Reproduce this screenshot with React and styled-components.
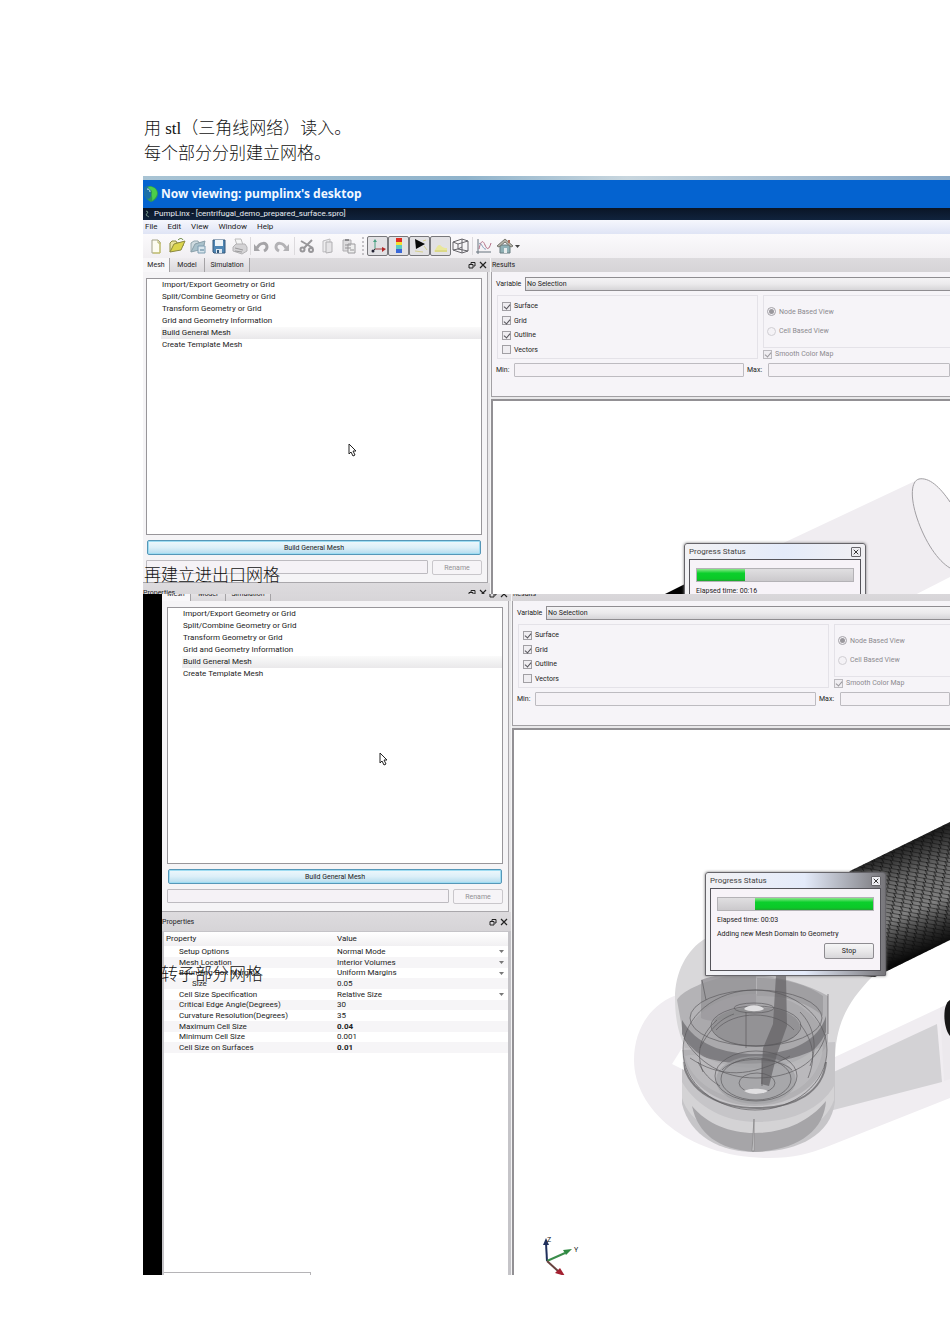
import React from "react";
import styled, { createGlobalStyle, css } from "styled-components";

const GlobalStyle = createGlobalStyle`
  * { box-sizing: border-box; }
  body { margin: 0; background: #fff; }
  button, input, select { font: inherit; color: inherit; margin: 0; }
`;

const ui = `Roboto, "Noto Sans", sans-serif`;
const docFont = `"Liberation Serif", "Noto Sans CJK SC", serif`;

/* ---------- document ---------- */
const Page = styled.main`
  padding: 116px 0 69px 143px;
  overflow: hidden;
`;
const Paragraph = styled.p`
  margin: 0;
  padding-left: 1px;
  font: 300 17px/25px ${docFont};
  color: #111;
  white-space: nowrap;
`;
const Caption = styled(Paragraph)`
  position: absolute;
  z-index: 3;
  left: ${(p) => p.$x}px;
  top: ${(p) => p.$y}px;
`;
const Figure = styled.section`
  position: relative;
  margin-top: ${(p) => p.$gap || 0}px;
  font: 7px/10px ${ui};
  color: #222;
  display: flex;
  background: #000;
  padding-left: ${(p) => p.$inset || 0}px;
  overflow: hidden;
`;
const Screen = styled.div`
  flex: 1;
  min-width: 0;
  background: #e9e8ea;
`;

/* ---------- window chrome ---------- */
const SkyStrip = styled.div`
  height: 4px;
  background: linear-gradient(90deg, #a9c4d4, #8fb3cb 40%, #c8d6de 60%, #88a9c8);
`;
const Banner = styled.header`
  height: 28px;
  display: flex;
  align-items: center;
  gap: 3px;
  padding-left: 1px;
  background: #0463d0;
  color: #f2f8ff;
  font: 700 12px/16px "Noto Sans", sans-serif;
  white-space: nowrap;
`;
const TitleBar = styled.div`
  height: 12px;
  display: flex;
  align-items: center;
  gap: 4px;
  padding-left: 2px;
  background: linear-gradient(#0a1526, #10233d);
  color: #e8edf2;
  font-size: 8px;
  white-space: nowrap;
`;
const MenuBar = styled.nav`
  height: 14px;
  display: flex;
  align-items: center;
  gap: 10px;
  padding-left: 2px;
  background: linear-gradient(#f6f7fd, #dfe4f5);
  font-size: 8px;
`;
const MenuButton = styled.button`
  border: 0;
  padding: 0;
  background: none;
`;
const ToolBar = styled.div`
  height: 24px;
  display: flex;
  align-items: center;
  padding-left: 3px;
  background: linear-gradient(#fbfafc, #f1eff2);
`;
const ToolGroup = styled.div`
  display: flex;
  gap: ${(p) => p.$gap || 0}px;
`;
const ToolButton = styled.button`
  width: ${(p) => (p.$on ? 21 : 20)}px;
  height: 20px;
  padding: 0;
  display: grid;
  place-items: center;
  border: 1px solid ${(p) => (p.$on ? "#77777b" : "transparent")};
  border-radius: 2px;
  background: ${(p) => (p.$on ? "#e2e1e4" : "none")};
`;
const Separator = styled.span`
  width: 1px;
  height: 18px;
  margin: 0 ${(p) => p.$side}px;
  background: #dcdadd;
`;
const Grip = styled.span`
  width: 2px;
  height: 18px;
  margin: 0 3px;
  border-left: 2px dotted #c4c2c6;
`;

/* ---------- workspace ---------- */
const Workspace = styled.div`
  display: flex;
  overflow: hidden;
  ${(p) => p.$clip && css`height: 336px;`}
`;
const Sidebar = styled.aside`
  position: relative;
  flex: none;
  width: ${(p) => 344 + p.$edge}px;
  display: flex;
  flex-direction: column;
  margin-top: ${(p) => p.$lift || 0}px;
`;
const Main = styled.section`
  flex: 1;
  min-width: 0;
  display: flex;
  flex-direction: column;
  border-left: 1px solid #f5f5f6;
  margin-top: ${(p) => p.$lift || 0}px;
`;
const DockBar = styled.div`
  flex: none;
  height: ${(p) => p.$h || 14}px;
  display: flex;
  align-items: center;
  background: linear-gradient(#dddbde, #d6d4d7);
`;
const DockTitle = styled.span`
  flex: 1;
  padding-left: ${(p) => p.$pad || 0}px;
`;
const Tab = styled.button`
  align-self: stretch;
  width: ${(p) => p.$w}px;
  padding: 0;
  border: 0;
  border-right: 1px solid #a5a3a6;
  background: ${(p) => (p.$on ? "#f8f7f9" : "linear-gradient(#eeecef, #dad8db)")};
`;
const DockControls = styled.div`
  display: flex;
  gap: 3px;
  margin-left: auto;
  padding-right: 3px;
`;
const IconButton = styled.button`
  width: 8px;
  height: 8px;
  padding: 0;
  border: 0;
  background: none;
  display: grid;
`;
const TaskPanel = styled.div`
  flex: none;
  height: 311px;
  margin-right: 2px;
  padding: 6px 5px 0 ${(p) => p.$edge}px;
  display: flex;
  flex-direction: column;
  gap: 5px;
  background: #f5f4f6;
  border: solid #a9a7ab;
  border-width: 0 1px 1px 0;
`;
const TaskList = styled.ul`
  height: 257px;
  margin: 0;
  padding: 0 0 0 14px;
  list-style: none;
  border: 1px solid #98969a;
  background: #fff;
`;
const TaskButton = styled.button`
  display: block;
  width: 100%;
  height: 12px;
  padding: 0 0 0 1px;
  border: 0;
  font-size: 8px;
  line-height: 12px;
  text-align: left;
  background: ${(p) => (p.$on ? "linear-gradient(#fafafa, #e9e8ea)" : "none")};
`;
const BuildButton = styled.button`
  flex: none;
  height: 15px;
  margin: 0 1px;
  padding: 0;
  border: 1px solid #5597b8;
  border-radius: 2px;
  background: linear-gradient(#eef8fc, #dceff8 50%, #b4dcee);
  box-shadow: inset 0 0 0 1px #9edcf2;
`;
const RenameRow = styled.div`
  display: flex;
  gap: 4px;
`;
const TextField = styled.input`
  flex: 1;
  min-width: 0;
  height: 14px;
  padding: 0 2px;
  border: 1px solid #bdbbc0;
  border-radius: 1px;
  background: #f5f2f6;
`;
const RenameButton = styled.button`
  width: 50px;
  height: 15px;
  padding: 0;
  border: 1px solid #c9c7cb;
  border-radius: 2px;
  background: #f6f4f7;
  color: #929094;
`;
const PropertyBox = styled.div`
  flex: 1;
  display: flex;
  flex-direction: column;
  background: #fff;
  border: solid #c5c4c8;
  border-width: 1px 3px 0 2px;
`;
const PropertyTable = styled.table`
  width: 100%;
  border-collapse: collapse;
  table-layout: fixed;
  font-size: 8px;
  line-height: 10px;
  td, th { padding: 0; text-align: left; font-weight: 400; white-space: nowrap; }
  thead tr { height: 14px; background: linear-gradient(#fff, #f1f0f2); }
  thead th { padding-left: 2px; }
  thead th:first-child { width: 171px; }
  tbody tr { height: 11px; }
  tbody tr:nth-child(3n) { height: 10px; }
  tbody tr:nth-child(even) { background: #f6f5f7; }
`;
const NameCell = styled.th`
  && { padding-left: ${(p) => (p.$deep ? 28 : 15)}px; }
`;
const ValueCell = styled.td`
  && { padding-left: 2px; font-weight: ${(p) => (p.$bold ? 700 : 400)}; }
`;
const ChoiceWrap = styled.span`
  display: flex;
  align-items: center;
  padding-right: 4px;
  height: 10px;
`;
const Choice = styled.select`
  flex: 1;
  min-width: 0;
  height: 10px;
  padding: 0;
  border: 0;
  appearance: none;
  background: none;
`;
const HintEdge = styled.div`
  width: 147px;
  height: 3px;
  margin-top: auto;
  border: solid #b5b4b7;
  border-width: 1px 1px 0 0;
`;

/* ---------- results form ---------- */
const ResultForm = styled.form`
  flex: none;
  height: 125px;
  padding: 5px 0 0 4px;
  display: flex;
  flex-direction: column;
  background: #f6f4f8;
  border: solid #a2a0a4;
  border-width: 0 0 1px 1px;
`;
const FormRow = styled.div`
  display: flex;
  align-items: center;
`;
const VariableLabel = styled.label`
  width: 29px;
`;
const VariableSelect = styled.select`
  flex: 1;
  min-width: 0;
  height: 14px;
  padding: 0 1px;
  border: 1px solid #8f8d91;
  border-right: 0;
  appearance: none;
  background: linear-gradient(#f4f3f5, #ebeaec 50%, #d6d5d8);
`;
const Options = styled.div`
  display: grid;
  grid-template-columns: ${(p) => p.$columns};
  column-gap: 5px;
  margin: 4px 0 0 1px;
  height: 64px;
`;
const GroupBox = styled.fieldset`
  min-width: 0;
  margin: 0;
  padding: ${(p) => (p.$muted ? "6px 3px" : "3px 4px 1px")};
  display: flex;
  flex-direction: column;
  border: 1px solid #e4e2e8;
  border-right-width: ${(p) => (p.$open ? 0 : 1)}px;
  height: ${(p) => p.$h}px;
  color: ${(p) => (p.$muted ? "#8c8a8f" : "#222")};
`;
const CheckLine = styled.label`
  flex: 1;
  display: flex;
  align-items: center;
  gap: 3px;
  line-height: 12px;
  color: ${(p) => (p.$muted ? "#8c8a8f" : "inherit")};
`;
const CheckBox = styled.input`
  appearance: none;
  flex: none;
  width: 9px;
  height: 9px;
  display: grid;
  place-items: center;
  border: 1px solid #a19fa4;
  background: #efedf1;
  &:checked::before {
    content: "";
    width: 3px;
    height: 5px;
    border: solid #55535a;
    border-width: 0 1px 1px 0;
    transform: rotate(40deg);
  }
  &:disabled { border-color: #bcbabf; }
  &:disabled::before { border-color: #99979c; }
`;
const Radio = styled.input`
  appearance: none;
  flex: none;
  width: 9px;
  height: 9px;
  display: grid;
  place-items: center;
  border: 1px solid #d0ced3;
  border-radius: 50%;
  background: #f4f2f6;
  &:checked { border-color: #a4a2a8; }
  &:checked::before {
    content: "";
    width: 5px;
    height: 5px;
    border-radius: 50%;
    background: #9a989d;
  }
`;
const RangeRow = styled.div`
  display: grid;
  grid-template-columns: 18px ${(p) => p.$columns};
  align-items: center;
  margin-top: 4px;
`;
const MaxLabel = styled.label`
  padding-left: 3px;
`;

/* ---------- viewport ---------- */
const Viewport = styled.div`
  position: relative;
  flex: 1;
  margin-top: 2px;
  background: #fff;
  border: solid #929094;
  border-width: 2px 0 0 2px;
  overflow: hidden;
  svg.scene { display: block; }
`;
const Dialog = styled.section`
  position: absolute;
  left: ${(p) => p.$x}px;
  top: ${(p) => p.$y}px;
  width: ${(p) => p.$w}px;
  padding: 0 4px 4px;
  border: 1px solid #66656a;
  border-radius: 3px 3px 0 0;
  background: linear-gradient(90deg, #f2f2f4, #e4ebfa 55%, ${(p) => p.$tint});
  box-shadow: 0 0 3px #777;
`;
const DialogBar = styled.header`
  height: 15px;
  display: flex;
  align-items: center;
  justify-content: space-between;
  font-size: 8px;
  color: #444;
`;
const CloseButton = styled.button`
  width: 10px;
  height: 10px;
  padding: 0;
  display: grid;
  place-items: center;
  border: 1px solid #66656a;
  border-radius: 1px;
  background: #eeeef2;
`;
const DialogBody = styled.div`
  height: 83px;
  padding: 8px 6px;
  display: flex;
  flex-direction: column;
  border: 1px solid #55545a;
  background: #f7f3f8;
`;
const Track = styled.div`
  height: 14px;
  display: flex;
  justify-content: ${(p) => (p.$end ? "flex-end" : "flex-start")};
  border: 1px solid #b4b2b6;
  background: linear-gradient(#e0dfe1, #cbc9cc);
  margin-bottom: 4px;
`;
const Fill = styled.div`
  background: linear-gradient(#8be88b, #0ccf2c 35%, #0bc928 80%, #20a530);
`;
const StatusText = styled.p`
  margin: 0 0 4px;
  white-space: nowrap;
`;
const StopButton = styled.button`
  align-self: flex-end;
  flex: none;
  width: 50px;
  height: 16px;
  padding: 0;
  border: 1px solid #8e8c91;
  border-radius: 2px;
  background: linear-gradient(#f6f6f7, #e9e8ea 50%, #d8d7da);
`;
const Pointer = styled.svg`
  position: absolute;
  left: ${(p) => p.$x}px;
  top: ${(p) => p.$y}px;
`;

/* ---------- icons ---------- */
const Icon = ({ children, size = 18 }) => (
  <svg width={size} height={size} viewBox="0 0 18 18" fill="none" aria-hidden="true">{children}</svg>
);
const icons = {
  new: <><path d="M5 3h6l2 2v11H5z" fill="#fdfcf0" stroke="#a3a288" /><path d="M11 3v3h3" stroke="#b5b26a" /><path d="M13 6v10H6" stroke="#c9c55e" /></>,
  open: <><path d="M2 15V6l2-2h4l1 2h6v3" fill="#e9e29a" stroke="#8b893f" /><path d="M2 15l4-8 11-3-4 9z" fill="#dbd44c" stroke="#8b893f" /><path d="M10 3c2-2 4-2 5 0" stroke="#5a7a30" /></>,
  import: <><path d="M2 15V6l3-2h4l1 2h5v2" fill="#cfdbe0" stroke="#93a6ae" /><path d="M2 15l4-8 10-3-2 8z" fill="#a9c1cb" stroke="#8ba0aa" /><path d="M9 9h7v7H9z" fill="#d8e5ec" stroke="#7c9cb0" /><path d="M11 13h4" stroke="#517a94" /></>,
  save: <><path d="M3 3h12v13H4l-1-1z" fill="#4f86b4" stroke="#34597b" /><path d="M5 3h8v6H5z" fill="#eef4f8" /><path d="M6 12h6v4H6z" fill="#dfe9f0" /><path d="M7 13h2v3H7z" fill="#34597b" /></>,
  print: <><path d="M6 8L4 2h6l2 6" fill="#f5f5f5" stroke="#bbb" /><path d="M2 10l3-3h9l2 3v4l-5 3-9-3z" fill="#d4d3d5" stroke="#b3b2b4" /><path d="M4 11l8 2M4 14l7 1" stroke="#9b9a9c" /></>,
  undo: <><path d="M2 7v7h6z" fill="#a5a4a7" /><path d="M5 11c3-6 10-6 10-1 0 2-1 3-3 4" stroke="#a5a4a7" strokeWidth="3" /></>,
  redo: <><path d="M16 7v7h-6z" fill="#b3b2b5" /><path d="M13 11C10 5 3 5 3 10c0 2 1 3 3 4" stroke="#b3b2b5" strokeWidth="3" /></>,
  cut: <><path d="M3 4l12 7M14 3L6 11" stroke="#98979a" strokeWidth="2" /><circle cx="4.500" cy="12.500" r="2" stroke="#98979a" strokeWidth="2" /><circle cx="13" cy="13" r="2" stroke="#98979a" strokeWidth="2" /></>,
  copy: <><path d="M4 4l7-2v12l-7 1z" fill="#ededee" stroke="#bdbcbf" /><path d="M7 5h6v10l-6 1z" fill="#e5e4e6" stroke="#b0afb2" /></>,
  paste: <><path d="M3 3h8v11H3z" fill="#dddcde" stroke="#b0afb2" /><path d="M5 3h4" stroke="#8a898c" strokeWidth="2" /><path d="M8 7h7v9H8z" fill="#eee" stroke="#9b9a9d" /><path d="M5 8h6M5 11h6M10 13h4" stroke="#939295" /></>,
  axes: <><path d="M6 12V4" stroke="#4aa182" /><path d="M4 5l2-3 2 3z" fill="#4aa182" /><path d="M6 12h8" stroke="#9c4444" /><path d="M13 10l4 2-4 3z" fill="#b32929" /><path d="M6 12l-2 2" stroke="#334" /><circle cx="4" cy="14" r="1.500" fill="#223" /></>,
  colors: <><path d="M6 1h6v4H6z" fill="#df2d22" /><path d="M6 5h6v3H6z" fill="#f1df31" /><path d="M6 8h6v4H6z" fill="#5ccbc0" /><path d="M6 12h6v4H6z" fill="#3a68d8" /></>,
  light: <><path d="M4 2l10 5-9 5z" fill="#080808" /><path d="M13 9l3 4M4 14l8 1M12 4l3-1" stroke="#d6d08c" /></>,
  surface: <><path d="M2 14c2-1 3-7 6-6 2 1 2 3 7 3v4H3z" fill="#e9e79c" /><path d="M3 14h12" stroke="#cdca73" /></>,
  cube: <><path d="M1 5l9-3 6 2v10l-6 2-9-3zM10 2v14M1 5l5 2 10-3M6 7v5M1 13l5-1 10 2M6 12l4-2" stroke="#66656a" /></>,
  graph: <><path d="M3 2v13h13" stroke="#66727d" /><path d="M1 15h2v2" stroke="#66727d" /><path d="M4 12c2-9 4-9 6-4s4 5 6-2" stroke="#b36f86" /><path d="M4 7c2-3 4 6 7 5" stroke="#7b96b2" /></>,
  home: <><path d="M4 8h10v8H4z" fill="#8fb0b5" stroke="#687c80" /><path d="M1 9l8-7 8 7-2 1-6-5-6 5z" fill="#b5b4a9" stroke="#77776f" /><path d="M8 11h3v5H8z" fill="#e8ecec" /><path d="M13 3v3" stroke="#b0705c" strokeWidth="2" /></>,
};
const Globe = () => (
  <svg width="14" height="18" viewBox="0 0 14 18" aria-hidden="true">
    <path d="M0 3c4-4 13-2 14 5 0 5-4 8-7 9-4-2-7-6-7-9z" fill="#2f9a55" />
    <path d="M0 3c3-3 8-1 7 2s1 4 0 6-2 3-3 3C1 13 0 10 0 8z" fill="#1b6fa8" />
    <path d="M4 2c4-1 9 1 9 6 0 4-3 6-5 8 1-4-1-5 0-8s-3-3-4-6z" fill="#4ccf4a" />
    <path d="M3 4c2 0 3 1 3 3" stroke="#d3f0dd" fill="none" />
  </svg>
);
const FloatIcon = () => (
  <svg width="8" height="8" viewBox="0 0 8 8" fill="none" stroke="#222" aria-hidden="true">
    <path d="M3 3V1.500h4V5H5.500" /><path d="M1 3.500h4V7H1z" />
  </svg>
);
const CrossIcon = ({ size = 8 }) => (
  <svg width={size} height={size} viewBox="0 0 8 8" stroke="#222" strokeWidth="1.200" aria-hidden="true">
    <path d="M1 1l6 6M7 1L1 7" />
  </svg>
);
const Caret = ({ color = "#444" }) => (
  <svg width="5" height="3" viewBox="0 0 5 3" fill={color} aria-hidden="true"><path d="M0 0h5L2.500 3z" /></svg>
);
const MousePointer = (p) => (
  <Pointer {...p} width="9" height="14" viewBox="0 0 9 14" aria-hidden="true">
    <path d="M1 1v10l2-2 2 4 2-1-2-4h3z" fill="#fff" stroke="#222" />
  </Pointer>
);

/* ---------- scenes ---------- */
const PipeScene = () => (
  <svg className="scene" width="457" height="194" viewBox="493 401 457 194" aria-hidden="true">
    <path d="M913 482L760 554 690 600H905L950 577V500L925 479z" fill="#f0edf1" />
    <path d="M950 502C940 487 929 477 919 479c-8 2-9 18-2 39 8 24 21 43 33 50" fill="#f3f1f4" stroke="#a19fa3" />
    <path d="M663 595l24-12v12z" fill="#000" />
  </svg>
);

const ImpellerScene = () => (
  <svg className="scene" width="436" height="545" viewBox="514 730 436 545" aria-hidden="true">
    <defs>
      <pattern id="mesh" width="9" height="4" patternUnits="userSpaceOnUse" patternTransform="rotate(10)">
        <path d="M0 0h9M0 0l3 4" stroke="#0c0c0c" fill="none" />
      </pattern>
      <linearGradient id="tube" gradientUnits="userSpaceOnUse" x1="890" y1="850" x2="930" y2="950">
        <stop offset="0" stopColor="#202020" />
        <stop offset="0.300" stopColor="#6a6a6a" />
        <stop offset="0.600" stopColor="#808080" />
        <stop offset="0.850" stopColor="#2c2c2c" />
        <stop offset="1" stopColor="#080808" />
      </linearGradient>
    </defs>
    {/* volute casing */}
    <path d="M680 994C652 1002 634 1028 634 1060c0 50 55 98 135 98 25 0 40-4 60-12l121-48v-95l-115 54-8-20-60-50z" fill="#f0edf1" />
    {/* outlet channel */}
    <path d="M937 1024l-112 52-15 40 132-34z" fill="#d3d2d5" />
    <path d="M940 1008l10-5v76l-6 2z" fill="#ece9ed" />
    {/* suction pipe */}
    <path d="M706 938c-20 12-31 35-31 60 0 22 4 36 10 50l150 14c0-34 10-58 38-86l-20-10z" fill="#d9d8da" />
    {/* lower cylinder */}
    <path d="M682 1050v54c8 32 38 48 72 48 40 0 76-14 81-50v-60z" fill="#c6c5c8" />
    <path d="M682 1082c15 26 45 40 74 40 34 0 64-12 78-36v14c-10 28-40 38-78 38-36 0-66-14-74-40z" fill="#d4d3d5" />
    <path d="M692 1106c15 18 38 27 62 27 28 0 54-10 72-32-2 30-28 49-72 51-36-3-56-18-62-46z" fill="#a6a5a8" />
    <path d="M752 1151l2-32v32z" fill="#e4e3e5" stroke="#919092" />
    {/* upper ring */}
    <path d="M677 1000c4-8 24-18 50-24 34-4 72 4 101 20v46c-10 26-36 22-72 22-44 0-68-12-74-36z" fill="#b4b3b6" />
    <path d="M701 980v38c15 8 30 -4 55-6V975c-20-4-40 0-55 5z" fill="#959497" opacity="0.800" />
    <path d="M757 978c24 0 50 6 66 18v20c-20-16-40-20-66-20z" fill="#a09fa2" />
    <ellipse cx="755" cy="1050" rx="72" ry="56" fill="#a2a1a4" fillOpacity="0.550" />
    <path d="M682 1020c14 24 40 34 74 34s62-12 70-38v16c-10 24-36 36-70 36-36 0-64-12-74-34z" fill="#777679" opacity="0.850" />
    <path d="M685 1056c10-4 24 4 40 6 20 3 60 4 98-16-2 34-30 54-68 54-36 0-64-18-70-44z" fill="#bcbbbe" opacity="0.800" />
    <ellipse cx="756" cy="1027" rx="44" ry="20" fill="#848386" opacity="0.600" />
    <ellipse cx="756" cy="1080" rx="40" ry="24" fill="#a09fa2" opacity="0.700" />
    <path d="M776 975l10 1 1 50-10 28-8 32-8-2 2-36 10-24z" fill="#626164" opacity="0.700" />
    <g fill="none" stroke="#59585b" strokeOpacity="0.650">
      <ellipse cx="756" cy="1026" rx="45" ry="20" />
      <ellipse cx="754" cy="1008" rx="20" ry="5" />
      <ellipse cx="756" cy="1018" rx="66" ry="28" />
      <ellipse cx="756" cy="1076" rx="41" ry="25" />
      <ellipse cx="756" cy="1079" rx="35" ry="21" />
      <ellipse cx="757" cy="1083" rx="18" ry="10" />
      <ellipse cx="755" cy="1050" rx="72" ry="60" />
      <path d="M683 1062c6 30 36 46 74 46s66-16 69-46" strokeWidth="2" />
      <path d="M684 1038c14 24 38 40 72 40s62-14 70-44M700 1048c10-20 22-30 34-34M810 1066c8-20 4-40-10-54M746 1012v36M762 1058v28M703 1072c-8-20-2-38 14-52M808 1078c8-20 6-36-8-54M698 1062c6 12 12 18 22 24M690 1058c30 20 60 20 100-2M702 980l4 20M828 994v40" />
      <path d="M716 1030c18-20 60-20 78 0M722 1070c12-14 56-14 70 0" />
    </g>
    <path d="M744 1009c4-5 16-5 20 0-4 3-16 3-20 0zM744 1091c6 4 18 4 24 0-4-3-20-3-24 0z" fill="#e0dfe1" />
    <path d="M672 1064l10-16 2 22z" fill="#fff" opacity="0.900" />
    {/* meshed inlet pipe */}
    <path d="M950 822l-100 49-40 50 40 54 25 2 75-37z" fill="url(#tube)" />
    <path d="M950 822l-100 49-40 50 40 54 25 2 75-37z" fill="url(#mesh)" />
    <path d="M950 1000c-8 4-7 28 0 36z" fill="#161616" />
    {/* orientation axes */}
    <path d="M547 1261l-1-18" stroke="#1f2f5c" strokeWidth="2" />
    <path d="M543 1245l3-7 3 7z" fill="#1f2f5c" />
    <path d="M547 1261l18-8" stroke="#3a8c4b" strokeWidth="2" />
    <path d="M563 1250l9-1-6 6z" fill="#2f8a42" />
    <path d="M547 1261l11 10" stroke="#68423f" strokeWidth="2" />
    <path d="M555 1273l5-5 5 8z" fill="#a32030" />
    <text x="547" y="1242" fontSize="7" fill="#222">Z</text>
    <text x="574" y="1252" fontSize="7" fill="#222">Y</text>
  </svg>
);

/* ---------- composed parts ---------- */
const tasks = [
  "Import/Export Geometry or Grid",
  "Split/Combine Geometry or Grid",
  "Transform Geometry or Grid",
  "Grid and Geometry Information",
  "Build General Mesh",
  "Create Template Mesh",
];
const properties = [
  { name: "Setup Options", value: "Normal Mode", choice: true },
  { name: "Mesh Location", value: "Interior Volumes", choice: true },
  { name: "Bounding Box Margins", value: "Uniform Margins", choice: true },
  { name: "Size", value: "0.05", deep: true },
  { name: "Cell Size Specification", value: "Relative Size", choice: true },
  { name: "Critical Edge Angle(Degrees)", value: "30" },
  { name: "Curvature Resolution(Degrees)", value: "35" },
  { name: "Maximum Cell Size", value: "0.04", bold: true },
  { name: "Minimum Cell Size", value: "0.001" },
  { name: "Cell Size on Surfaces", value: "0.01", bold: true },
];

const Controls = () => (
  <DockControls>
    <IconButton type="button" aria-label="Float"><FloatIcon /></IconButton>
    <IconButton type="button" aria-label="Close"><CrossIcon /></IconButton>
  </DockControls>
);

const Tool = ({ name, on }) => (
  <ToolButton type="button" aria-label={name} $on={on}><Icon>{icons[name]}</Icon></ToolButton>
);

function TaskDock({ edge, lift, pointer, children, label }) {
  return (
    <Sidebar $edge={edge} $lift={lift}>
      <DockBar role="tablist">
        <Tab type="button" role="tab" aria-selected="true" $on $w={24 + edge}>Mesh</Tab>
        <Tab type="button" role="tab" $w={35}>Model</Tab>
        <Tab type="button" role="tab" $w={45}>Simulation</Tab>
        <Controls />
      </DockBar>
      <TaskPanel $edge={edge}>
        <TaskList>
          {tasks.map((t) => (
            <li key={t}><TaskButton type="button" $on={t === "Build General Mesh"}>{t}</TaskButton></li>
          ))}
        </TaskList>
        <BuildButton type="button">Build General Mesh</BuildButton>
        <RenameRow>
          <TextField aria-label={label} disabled />
          <RenameButton type="button" disabled>Rename</RenameButton>
        </RenameRow>
      </TaskPanel>
      <DockBar $h={19}><DockTitle>Properties</DockTitle><Controls /></DockBar>
      {children}
      <MousePointer $x={pointer.x} $y={pointer.y} />
    </Sidebar>
  );
}

function Results({ id, lift, options, range, children }) {
  return (
    <Main $lift={lift}>
      <DockBar><DockTitle $pad={1}>Results</DockTitle></DockBar>
      <ResultForm>
        <FormRow>
          <VariableLabel htmlFor={`${id}-variable`}>Variable</VariableLabel>
          <VariableSelect id={`${id}-variable`}><option>No Selection</option></VariableSelect>
        </FormRow>
        <Options $columns={options}>
          <GroupBox $h={64}>
            {["Surface", "Grid", "Outline", "Vectors"].map((n) => (
              <CheckLine key={n}><CheckBox type="checkbox" defaultChecked={n !== "Vectors"} />{n}</CheckLine>
            ))}
          </GroupBox>
          <div>
            <GroupBox $h={53} $open $muted>
              <CheckLine><Radio type="radio" name={`${id}-view`} defaultChecked disabled />Node Based View</CheckLine>
              <CheckLine><Radio type="radio" name={`${id}-view`} disabled />Cell Based View</CheckLine>
            </GroupBox>
            <CheckLine $muted><CheckBox type="checkbox" defaultChecked disabled />Smooth Color Map</CheckLine>
          </div>
        </Options>
        <RangeRow $columns={range}>
          <label htmlFor={`${id}-min`}>Min:</label>
          <TextField id={`${id}-min`} disabled />
          <MaxLabel htmlFor={`${id}-max`}>Max:</MaxLabel>
          <TextField id={`${id}-max`} disabled />
        </RangeRow>
      </ResultForm>
      <Viewport>{children}</Viewport>
    </Main>
  );
}

function Progress({ x, y, w, tint, percent, end, elapsed }) {
  return (
    <Dialog role="dialog" aria-label="Progress Status" $x={x} $y={y} $w={w} $tint={tint}>
      <DialogBar>
        Progress Status
        <CloseButton type="button" aria-label="Close"><CrossIcon size={6} /></CloseButton>
      </DialogBar>
      <DialogBody>
        <Track $end={end} role="progressbar"><Fill style={{ width: `${percent}%` }} /></Track>
        <StatusText>Elapsed time: {elapsed}</StatusText>
        <StatusText>Adding new Mesh Domain to Geometry</StatusText>
        <StopButton type="button">Stop</StopButton>
      </DialogBody>
    </Dialog>
  );
}

export default function App() {
  return (
    <Page lang="zh-CN">
      <GlobalStyle />
      <Paragraph>用 stl（三角线网络）读入。</Paragraph>
      <Paragraph>每个部分分别建立网格。</Paragraph>

      <Figure $gap={10}>
        <Screen>
          <SkyStrip />
          <Banner><Globe />Now viewing: pumplinx's desktop</Banner>
          <TitleBar>
            <svg width="5" height="8" viewBox="0 0 5 8" aria-hidden="true"><path d="M1 1l2 1-2 3 3 2" stroke="#6f8f83" fill="none" /></svg>
            PumpLinx - [centrifugal_demo_prepared_surface.spro]
          </TitleBar>
          <MenuBar>
            {["File", "Edit", "View", "Window", "Help"].map((m) => <MenuButton type="button" key={m}>{m}</MenuButton>)}
          </MenuBar>
          <ToolBar>
            <ToolGroup $gap={1}>
              <Tool name="new" /><Tool name="open" /><Tool name="import" /><Tool name="save" /><Tool name="print" />
            </ToolGroup>
            <Separator $side={0} />
            <ToolGroup $gap={1}><Tool name="undo" /><Tool name="redo" /></ToolGroup>
            <Separator $side={2} />
            <ToolGroup $gap={1}><Tool name="cut" /><Tool name="copy" /><Tool name="paste" /></ToolGroup>
            <Grip />
            <ToolGroup>
              <Tool name="axes" on /><Tool name="colors" on /><Tool name="light" on /><Tool name="surface" on />
              <Tool name="cube" />
            </ToolGroup>
            <Separator $side={1} />
            <ToolGroup $gap={1}><Tool name="graph" /><Tool name="home" /></ToolGroup>
            <Caret />
          </ToolBar>
          <Workspace $clip>
            <TaskDock edge={3} pointer={{ x: 205, y: 185 }} label="Mesh name" />
            <Results id="first" options="261fr 187fr" range="230fr 24px 182fr">
              <PipeScene />
              <Progress x={191} y={142} w={182} tint="#f1f0f3" percent={31} elapsed="00:16" />
            </Results>
          </Workspace>
        </Screen>
        <Caption $x={0} $y={387}>再建立进出口网格</Caption>
      </Figure>

      <Figure $inset={19}>
        <Screen>
          <Workspace>
            <TaskDock edge={5} lift={-7} pointer={{ x: 217, y: 165 }} label="Grid name">
              <PropertyBox>
                <PropertyTable>
                  <thead><tr><th>Property</th><th>Value</th></tr></thead>
                  <tbody>
                    {properties.map((p) => (
                      <tr key={p.name}>
                        <NameCell scope="row" $deep={p.deep}>{p.name}</NameCell>
                        <ValueCell $bold={p.bold}>
                          {p.choice ? (
                            <ChoiceWrap>
                              <Choice aria-label={p.name}><option>{p.value}</option></Choice>
                              <Caret color="#777" />
                            </ChoiceWrap>
                          ) : p.value}
                        </ValueCell>
                      </tr>
                    ))}
                  </tbody>
                </PropertyTable>
                <HintEdge />
              </PropertyBox>
            </TaskDock>
            <Results id="second" lift={-7} options="311fr 116fr" range="281fr 24px 110fr">
              <ImpellerScene />
              <Progress x={191} y={142} w={181} tint="#77767a" percent={76} end elapsed="00:03" />
            </Results>
          </Workspace>
        </Screen>
        <Caption $x={17} $y={368}>转子部分网格</Caption>
      </Figure>
    </Page>
  );
}
